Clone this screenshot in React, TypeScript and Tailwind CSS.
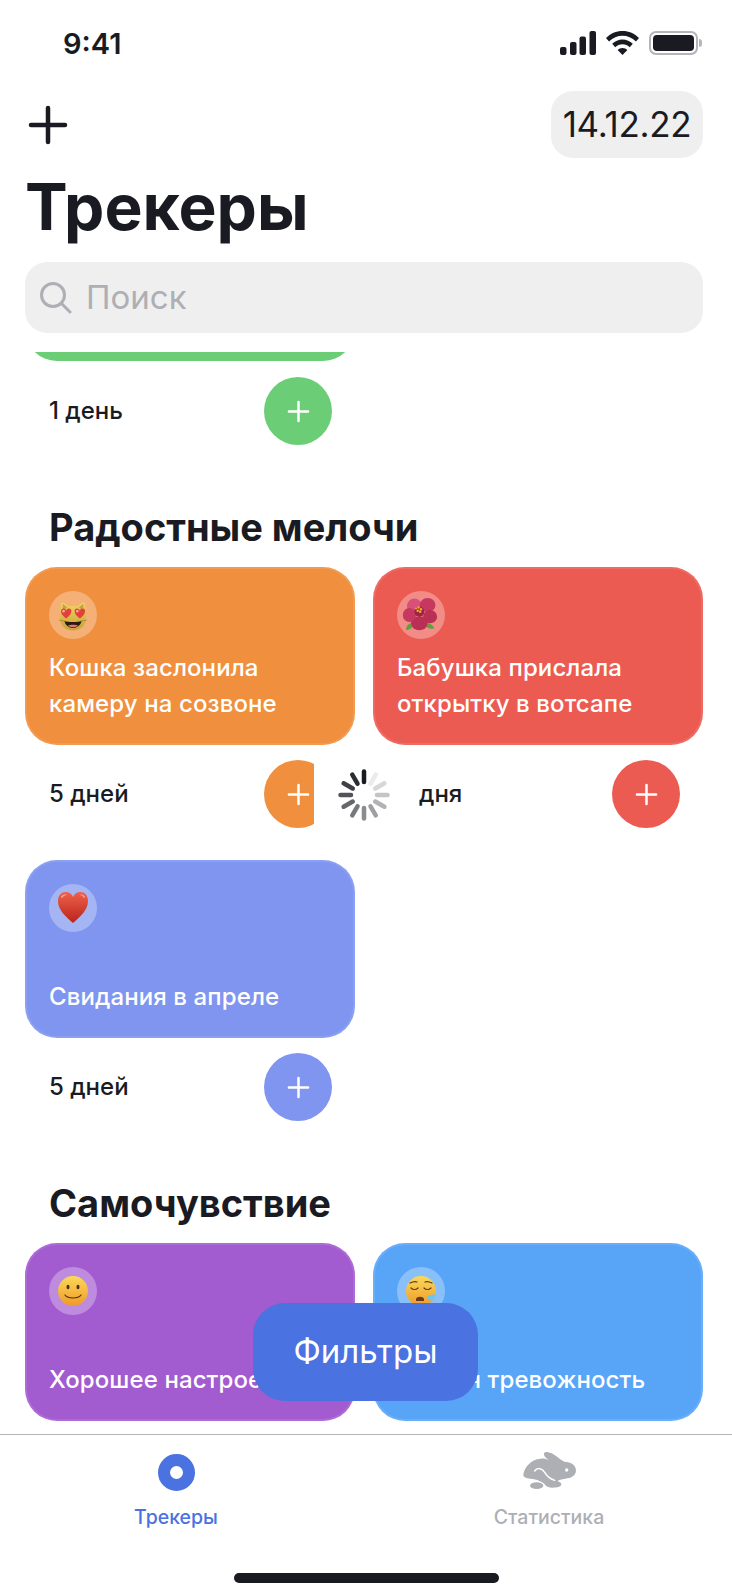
const Plus = ({ size = 24 }: { size?: number }) => (
  <svg width={size} height={size} viewBox="0 0 24 24" fill="none" stroke="white" strokeWidth="2.600" strokeLinecap="round">
    <path d="M12 2v20M2 12h20" />
  </svg>
);

const CatEmoji = () => (
  <svg width="48" height="48" viewBox="-4 -4 56 56">
    <defs>
      <linearGradient id="catFace" x1="0" y1="0" x2="0" y2="1">
        <stop offset="0" stopColor="#F3D45E" />
        <stop offset="1" stopColor="#C9A23A" />
      </linearGradient>
    </defs>
    <path d="M9 28C9 22 9 14 11 9c3 1 6 3 8 5 3-1 7-1 10 0 2-2 5-4 8-5 2 5 2 13 2 19 0 9-7 14-15 14S9 37 9 28Z" fill="url(#catFace)" />
    <path d="M12 11l5 4-5 5zM36 11l-5 4 5 5z" fill="#A8863A" opacity=".6" />
    <path d="M14 31c5 1.500 15 1.500 20 0-1 5-5 8-10 8s-9-3-10-8Z" fill="#2A1A14" />
    <path d="M18 36.500c3-1.500 9-1.500 12 0-2 2-10 2-12 0Z" fill="#E8746A" />
    <path d="M16 31.500 8 30M32 31.500l8-1.500" stroke="#8A6A2A" strokeWidth=".7" />
    <path d="M16 28c-3-2-6-5-6-8 0-4 5-5 6-1 1-4 7-3 6 1 0 3-3 6-6 8Z" fill="#E2403C" />
    <path d="M32 28c-3-2-6-5-6-8-1-4 5-5 6-1 1-4 7-3 6 1 0 3-3 6-6 8Z" fill="#E2403C" />
    <circle cx="13" cy="19.500" r="1.500" fill="#F5A8A0" />
    <circle cx="29" cy="19.500" r="1.500" fill="#F5A8A0" />
  </svg>
);

const FlowerEmoji = () => (
  <svg width="48" height="48" viewBox="-2 -3 58 58">
    <path d="M9 44c0-5 3-8 8-9 1 5-2 9-8 9ZM43 42c-2 1-8 1-10-3l2-3c3 0 7 3 8 6Z" fill="#5DA13A" />
    <g>
      <ellipse cx="19" cy="15" rx="9" ry="9" fill="#D9507A" />
      <ellipse cx="35" cy="14" rx="9.500" ry="8.500" fill="#C6385F" />
      <ellipse cx="38" cy="28" rx="8.500" ry="8" fill="#B92F55" />
      <ellipse cx="25" cy="36" rx="10" ry="8.500" fill="#B92F55" />
      <ellipse cx="13" cy="26" rx="8" ry="8.500" fill="#C6385F" />
    </g>
    <circle cx="25" cy="22" r="6" fill="#A02248" />
    <g fill="#EDA92E">
      <circle cx="24" cy="17" r="1.500" />
      <circle cx="27" cy="19" r="1.500" />
      <circle cx="23" cy="21" r="1.500" />
      <circle cx="26" cy="22" r="1.500" />
      <circle cx="21" cy="18" r="1.200" />
    </g>
  </svg>
);

const HeartEmoji = () => (
  <svg width="48" height="48" viewBox="0 0 48 48">
    <defs>
      <linearGradient id="heart" x1="0" y1="0" x2="0" y2="1">
        <stop offset="0" stopColor="#F0604A" />
        <stop offset="1" stopColor="#B9241C" />
      </linearGradient>
    </defs>
    <path d="M24 39C17 33 9 26 9 17c0-6 4-9 7.500-9 4 0 6.500 2 7.500 5 1-3 3.500-5 7.500-5 3.500 0 7.500 3 7.500 9 0 9-8 16-15 22Z" fill="url(#heart)" />
    <path d="M12 13c1-2 4-3 6-2-2 0-4 1-5 3ZM36 13c-1-2-3-3-5-2 2 0 3 1 4 3Z" fill="#F8B0A0" />
  </svg>
);

const SmileEmoji = () => (
  <svg width="48" height="48" viewBox="0 0 48 48">
    <defs>
      <linearGradient id="smile" x1="0" y1="0" x2="0" y2="1">
        <stop offset="0" stopColor="#FBD95A" />
        <stop offset="1" stopColor="#F09A28" />
      </linearGradient>
    </defs>
    <circle cx="24" cy="24" r="15" fill="url(#smile)" />
    <ellipse cx="19" cy="20" rx="1.500" ry="2.200" fill="#4A3018" />
    <ellipse cx="29" cy="20" rx="1.500" ry="2.200" fill="#4A3018" />
    <path d="M16 28c3 4 13 4 16 0" fill="none" stroke="#4A3018" strokeWidth="1.200" strokeLinecap="round" />
  </svg>
);

const SleepyEmoji = () => (
  <svg width="48" height="48" viewBox="0 0 48 48">
    <defs>
      <linearGradient id="sleepy" x1="0" y1="0" x2="0" y2="1">
        <stop offset="0" stopColor="#FBD95A" />
        <stop offset="1" stopColor="#F09A28" />
      </linearGradient>
    </defs>
    <circle cx="24" cy="24" r="15" fill="url(#sleepy)" />
    <path d="M13 16c2-1 5-2 7-1M35 16c-2-1-5-2-7-1M14 21c2 2 5 2 7 0M27 21c2 2 5 2 7 0" fill="none" stroke="#5A3A1A" strokeWidth="1.200" strokeLinecap="round" />
    <path d="M19 32c1-3 7-3 8 0v2H19Z" fill="#6A3A20" />
    <path d="M30 30c2-2 6-3 9-2-1 4-4 6-7 5-1-1-2-2-2-3Z" fill="#6CC4F0" />
  </svg>
);

const Rabbit = () => (
  <svg width="70" height="50" viewBox="0 0 210 150">
    <path
      d="M28 90C30 68 50 43 80 41C88 40 98 42 106 46C98 40 88 34 90 25C94 18 108 22 118 28C131 36 141 46 151 50C172 50 186 62 186 76C186 92 172 100 154 101C142 102 134 106 130 108C134 110 142 112 142 118C142 127 128 128 115 128C105 128 95 125 92 118C85 110 70 104 55 102C40 100 28 98 28 90Z"
      fill="#AEAFB4"
    />
    <path d="M62 78C70 66 85 70 92 82C98 92 105 100 122 106" fill="none" stroke="white" strokeWidth="4.500" strokeLinecap="round" />
    <ellipse cx="68" cy="122" rx="20" ry="10" fill="#AEAFB4" />
    <circle cx="158" cy="75" r="5" fill="white" />
  </svg>
);

const Spinner = () => (
  <svg width="52" height="52" viewBox="-26 -26 52 52">
    {Array.from({ length: 12 }).map((_, i) => (
      <line
        key={i}
        x1="0"
        y1="-13"
        x2="0"
        y2="-23.500"
        stroke="#1A1B22"
        strokeWidth="4.500"
        strokeLinecap="round"
        opacity={(i === 0 ? 12 : i) / 12}
        transform={`rotate(${i * 30})`}
      />
    ))}
  </svg>
);

const StatusIcons = () => (
  <div className="flex items-center gap-[10px]">
    <svg width="36" height="24" viewBox="0 0 36 24" fill="#1A1B22">
      <rect x="0" y="16" width="6.500" height="8" rx="2" />
      <rect x="10" y="11" width="6.500" height="13" rx="2" />
      <rect x="19.500" y="5.500" width="6.500" height="18.500" rx="2" />
      <rect x="29.500" y="0" width="6.500" height="24" rx="2" />
    </svg>
    <svg width="33" height="24" viewBox="0 0 33 24" fill="#1A1B22">
      <path d="M16.500 0C10 0 4.500 2.500 0 7l3 3.500C7 6.700 11.500 4.700 16.500 4.700S26 6.700 30 10.500L33 7C28.500 2.500 23 0 16.500 0Z" />
      <path d="M16.500 8.500c-4 0-7.500 1.600-10.300 4.300l3 3.400c2-1.900 4.500-3 7.300-3s5.300 1.100 7.300 3l3-3.400C24 10.100 20.500 8.500 16.500 8.500Z" />
      <path d="M16.500 17c-2 0-3.600.8-4.900 2l4.900 5 4.900-5c-1.300-1.200-2.900-2-4.900-2Z" />
    </svg>
    <div className="flex items-center">
      <div className="w-[49px] h-[24px] rounded-[7px] border-2 border-[#B5B5B8] p-[2px]">
        <div className="w-full h-full rounded-[4px] bg-[#1A1B22]" />
      </div>
      <div className="w-[3px] h-[8px] rounded-r-sm bg-[#B5B5B8] ml-[1px]" />
    </div>
  </div>
);

type Tracker = {
  title: string[];
  days: string;
  bg: string;
  emoji: React.ReactNode;
  dayPad?: string;
  loading?: boolean;
};

const TrackerCard = ({ t }: { t: Tracker }) => (
  <div>
    <div className={`h-[178px] rounded-[32px] border-2 border-white/10 pl-[22px] pt-[22px] pb-[21px] flex flex-col justify-between ${t.bg}`}>
      <div className="w-[48px] h-[48px] rounded-full bg-white/30">{t.emoji}</div>
      <div className="text-[24px] leading-[36px] font-[450] text-white tracking-[0.1px] whitespace-nowrap">
        {t.title.map((l) => (
          <div key={l}>{l}</div>
        ))}
      </div>
    </div>
    <div className="relative flex items-center justify-between mt-[15px] pr-[23px]">
      <span className={`${t.dayPad ?? "pl-[24px]"} text-[24px] font-medium text-[#1A1B22]`}>{t.days}</span>
      <div className={`w-[68px] h-[68px] rounded-full flex items-center justify-center ${t.bg}`}>
        <Plus size={23} />
      </div>
      {t.loading && (
        <div className="absolute left-[289px] top-[-10px] w-[100px] h-[90px] bg-white z-10 flex items-center justify-center">
          <Spinner />
        </div>
      )}
    </div>
  </div>
);

const joy: Tracker[] = [
  { title: ["Кошка заслонила", "камеру на созвоне"], days: "5 дней", bg: "bg-[#F08F3D]", emoji: <CatEmoji />, loading: true },
  { title: ["Бабушка прислала", "открытку в вотсапе"], days: "дня", bg: "bg-[#EC5B52]", emoji: <FlowerEmoji />, dayPad: "pl-[46px]" },
  { title: ["Свидания в апреле"], days: "5 дней", bg: "bg-[#7F95F0]", emoji: <HeartEmoji /> },
];

const health: Tracker[] = [
  { title: ["Хорошее настроение"], days: "", bg: "bg-[#A35BD0]", emoji: <SmileEmoji /> },
  { title: ["Лёгкая тревожность"], days: "", bg: "bg-[#58A5F8]", emoji: <SleepyEmoji /> },
];

export default function App() {
  return (
    <div className="relative w-[732px] h-[1594px] bg-white overflow-hidden flex flex-col font-['Inter',sans-serif] text-[#1A1B22]">
      {/* Status bar */}
      <div className="h-[91px] shrink-0 flex items-start justify-between pl-[63px] pr-[30px] pt-[26px]">
        <span className="text-[29px] leading-[36px] font-semibold">9:41</span>
        <div className="pt-[5px]">
          <StatusIcons />
        </div>
      </div>

      {/* Header */}
      <div className="shrink-0 pl-[25px] pr-[29px]">
        <div className="flex items-center justify-between">
          <svg className="ml-px" width="44" height="44" viewBox="0 0 44 44" fill="none" stroke="#1A1B22" strokeWidth="4.500" strokeLinecap="round">
            <path d="M22 5v34M5 22h34" />
          </svg>
          <div className="w-[152px] h-[67px] rounded-[22px] bg-[#EFEFEF] flex items-center justify-center text-[35px] tracking-[-0.3px]">14.12.22</div>
        </div>
        <h1 className="mt-[11px] h-[76px] text-[64px] leading-[76px] font-bold">Трекеры</h1>
        <div className="mt-[17px] h-[71px] rounded-[22px] bg-[#EFEFEF] flex items-center pl-[15px] gap-[14px]">
          <svg width="32" height="32" viewBox="0 0 32 32" fill="none" stroke="#AEAFB4" strokeWidth="3" strokeLinecap="round">
            <circle cx="13" cy="13" r="11.500" />
            <path d="M21.500 21.500 30 30" />
          </svg>
          <span className="text-[33px] text-[#AEAFB4]">Поиск</span>
        </div>
      </div>

      {/* List */}
      <div className="flex-1 min-h-0 overflow-hidden mt-[19px] pl-[25px] pr-[29px]">
        <div className="mt-[-169px] h-[178px] rounded-[32px] bg-[#6BCE77] w-[330px]" />
        <div className="flex items-center justify-between mt-[16px] w-[330px] pr-[23px]">
          <span className="pl-[24px] text-[24px] font-medium">1 день</span>
          <div className="w-[68px] h-[68px] rounded-full bg-[#6BCE77] flex items-center justify-center">
            <Plus size={23} />
          </div>
        </div>

        <h2 className="mt-[60px] mb-[18px] pl-[24px] text-[38px] leading-[44px] font-bold">Радостные мелочи</h2>
        <div className="grid grid-cols-2 gap-x-[18px] gap-y-[32px]">
          {joy.map((t) => (
            <TrackerCard key={t.title[0]} t={t} />
          ))}
        </div>

        <h2 className="mt-[60px] mb-[18px] pl-[24px] text-[38px] leading-[44px] font-bold">Самочувствие</h2>
        <div className="grid grid-cols-2 gap-x-[18px]">
          {health.map((t) => (
            <TrackerCard key={t.title[0]} t={t} />
          ))}
        </div>
      </div>

      {/* Filter button */}
      <div className="absolute left-[253px] top-[1303px] w-[225px] h-[98px] rounded-[32px] bg-[#4A72E0] z-20 flex items-center justify-center text-white text-[33px]">
        Фильтры
      </div>

      {/* Tab bar */}
      <div className="h-[160px] shrink-0 bg-white border-t border-[#B5B5B5] flex flex-col z-10 relative">
        <div className="flex justify-between pt-[10px] pl-[116px] pr-[123px]">
          <div className="w-[120px] flex flex-col items-center">
            <div className="h-[50px] flex items-center pt-[4px]">
              <div className="w-[37px] h-[37px] rounded-full border-[12px] border-[#4A72E0]" />
            </div>
            <span className="mt-[10px] text-[19.500px] leading-[24px] font-medium text-[#4A72E0]">Трекеры</span>
          </div>
          <div className="w-[120px] flex flex-col items-center">
            <Rabbit />
            <span className="mt-[10px] text-[19.500px] leading-[24px] font-medium text-[#AEAFB4]">Статистика</span>
          </div>
        </div>
        <div className="mt-auto mb-[11px] self-center w-[265px] h-[10px] rounded-full bg-[#1A1B22]" />
      </div>
    </div>
  );
}
